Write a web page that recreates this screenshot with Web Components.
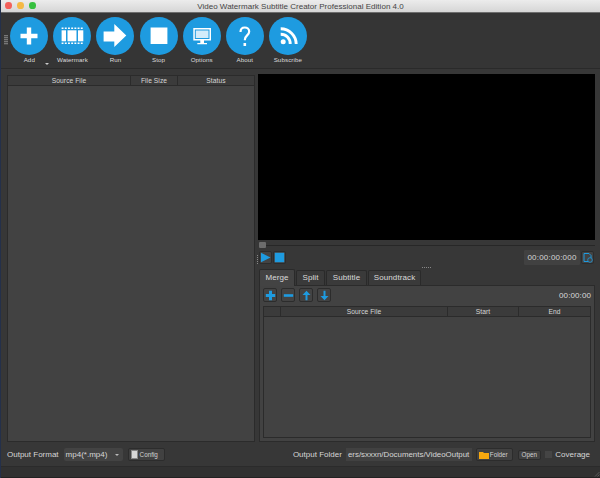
<!DOCTYPE html>
<html lang="en"><head><meta charset="utf-8"><title>Video Watermark Subtitle Creator</title>
<style>
html,body{margin:0;padding:0;background:#333}
body{width:600px;height:478px;overflow:hidden;font-family:"Liberation Sans",Arial,sans-serif}
</style></head><body>
<app-window></app-window>
<script>
function def(name, css, html){
  customElements.define(name, class extends HTMLElement{
    constructor(){super();const r=this.attachShadow({mode:'open'});
      const h=typeof html==='function'?html(this):html;
      r.innerHTML='<style>'+css+'</style>'+h;}
  });
}
const dots=y=>[8.6,11.8,15,18.2,21.4,24.600,27.8].map(x=>`<rect x="${x}" y="${y}" width="1.900" height="1.500" fill="#fff"/>`).join('');
const ICONS={
 add:'<path d="M16.800 10.500h4.400v6.300h6.300v4.400h-6.300v6.300h-4.400v-6.300h-6.300v-4.400h6.300z" fill="#fff"/>',
 watermark:dots(10.500)+dots(25.500)+'<rect x="8.600" y="13.300" width="4.400" height="11" fill="#fff"/><rect x="14.500" y="13.300" width="9" height="11" fill="#fff"/><rect x="25" y="13.300" width="5.300" height="11" fill="#fff"/>',
 run:'<path fill="#fff" d="M7.600 14.500H18.300V7L30.300 18.500 18.300 30V24.500H7.600z"/>',
 stop:'<rect x="10.600" y="10.500" width="16.800" height="16.500" fill="#fff"/>',
 options:'<path fill="#fff" fill-rule="evenodd" d="M10.300 11H28V23.500H21V26h3V27.300H14.300V26h3V23.500H10.300zM11.800 12.500V22H26.500V12.500z"/><rect x="12.800" y="13.500" width="12.700" height="7.500" fill="#d4ecfa"/>',
 about:'<path fill="none" stroke="#fff" stroke-width="2.200" d="M14.500 15c0-3 1.900-4.500 4.300-4.500s4.400 1.600 4.400 4c0 3.800-4.300 3.900-4.300 8v.8"/><rect x="17.500" y="26" width="2.600" height="3" fill="#fff"/>',
 subscribe:'<circle cx="14.200" cy="24.700" r="2.500" fill="#fff"/><path fill="none" stroke="#fff" stroke-width="2.900" d="M11.700 17.200a9.500 9.500 0 0 1 9.500 9.800M11.700 11.800a15.500 15.500 0 0 1 15.500 15.200"/>'
};
def('window-title',`:host{display:flex;flex:none;align-items:center;height:13px;box-sizing:border-box;background:linear-gradient(#ececec,#d6d6d6);border-bottom:1px solid #6d6d6d;position:relative}
 .l{display:flex;gap:5.300px;padding-left:4.300px;margin-top:-1px}.l i{width:6.700px;height:6.700px;border-radius:50%;display:block}
 .t{position:absolute;left:0;right:0;text-align:center;font:8px "Liberation Sans",sans-serif;letter-spacing:.02px;color:#444;top:1.500px}`,
 `<div class="l"><i style="background:#f3605b"></i><i style="background:#f5b945"></i><i style="background:#37c03f"></i></div><div class="t">Video Watermark Subtitle Creator Professional Edition 4.0</div>`);
def('tool-button',`:host{display:flex;flex-direction:column;align-items:center;flex:none;width:38px;margin-right:5.100px;position:relative}
 svg{display:block;width:38px;height:38px;flex:none}
 span{font:6.200px/7px "Liberation Sans",sans-serif;color:#dcdcdc;margin-top:1.200px;white-space:nowrap;letter-spacing:.1px}
 .m{position:absolute;right:-1px;top:46px;width:0;height:0;border:2px solid transparent;border-top:2px solid #ccc;border-bottom:0}`,
 e=>`<svg viewBox="0 0 38 38"><circle cx="19" cy="19" r="19" fill="#1e9be0"/>${ICONS[e.getAttribute('icon')]}</svg><span>${e.getAttribute('label')}</span>${e.hasAttribute('menu')?'<i class="m"></i>':''}`);
def('tool-bar',`:host{display:flex;flex:none;height:56px;background:#353535;padding:3.500px 0 0 3px;box-sizing:border-box;border-bottom:1px solid #2a2a2a}
 .g{width:4px;height:10px;margin:18.500px 2.300px 0 0;background:repeating-linear-gradient(#777 0 1px,#4a4a4a 1px 2px);flex:none}`,
 `<div class="g"></div><slot></slot>`);
def('data-table',`:host{display:flex;flex-direction:column;min-height:0;background:#424242;border:1px solid #2b2b2b;box-sizing:border-box}
 .h{display:flex;flex:none;height:9px;background:#3b3b3b;border-bottom:1px solid #2b2b2b;font:6.700px/9px "Liberation Sans",sans-serif;color:#d6d6d6;letter-spacing:.05px}
 .h span{display:block;text-align:center;border-right:1px solid #2b2b2b;box-sizing:border-box;flex:none}.h span:last-child{border:0;flex:1}`,
 e=>`<div class="h">${e.getAttribute('cols').split('|').map(c=>{const[a,b]=c.split(':');return `<span style="width:${b}px">${a}</span>`}).join('')}</div>`);
def('icon-btn',`:host{display:flex;align-items:center;justify-content:center;flex:none;width:13px;height:13px;background:#434343;border:.5px solid #2c2c2c;border-radius:2px;box-sizing:border-box}
 svg{display:block;width:11px;height:11px}`,
 e=>`<svg viewBox="0 0 11 11">${e.getAttribute('d')}</svg>`);
def('video-pane',`:host{display:flex;flex-direction:column;flex:none}
 .v{height:166px;background:#000;flex:none}
 .s{height:10px;flex:none;display:flex;align-items:center;position:relative}
 .s b{display:block;height:1px;background:#272727;flex:1;margin-left:6px}
 .s i{display:block;width:7px;height:6.500px;border-radius:1px;background:#6d6d6d;position:absolute;left:1px;top:1.500px}
 .c{display:flex;align-items:flex-start;gap:1px;height:16px;padding:0 1px 0 1px;flex:none;position:relative}
 .c icon-btn{margin-top:.5px}
 .sp{flex:1}
 .tm{font:8px/15px "Liberation Sans",sans-serif;color:#d6d6d6;background:#414141;width:56px;height:15px;text-align:center;letter-spacing:.2px;border-radius:1px}
 .vg{position:absolute;left:-1px;top:5px;width:1px;height:10px;background:repeating-linear-gradient(#888 0 1px,transparent 1px 2px)}`,
 `<div class="v"></div><div class="s"><b></b><i></i></div><div class="c"><span class="vg"></span>
 <icon-btn d='<path d="M1 .8l9.500 4.700L1 10.200z" fill="#1e9be0"/>'></icon-btn>
 <icon-btn d='<rect x=".8" y=".8" width="9.400" height="9.400" fill="#1e9be0"/>'></icon-btn>
 <div class="sp"></div><div class="tm">00:00:00:000</div>
 <icon-btn d='<path d="M2 1.500h5l2 2v6H2z" fill="none" stroke="#1e9be0" stroke-width="1"/><circle cx="8" cy="8" r="2.300" fill="#434343" stroke="#1e9be0" stroke-width=".8"/>'></icon-btn></div>`);
def('tab-panel',`:host{display:flex;flex-direction:column;flex:1;min-height:0;margin-left:1px}
 .t{display:flex;flex:none;height:16px;gap:1px;font:8px/14px "Liberation Sans",sans-serif;color:#dadada;letter-spacing:.1px}
 .t span{display:block;flex:none;background:#3a3a3a;border:.5px solid #2a2a2a;border-bottom:0;margin-top:1px;height:15px;box-sizing:border-box;border-radius:2px 2px 0 0;line-height:14px;text-align:center}
 .t span.a{background:#434343;margin-top:0;height:17px;position:relative;z-index:1;line-height:15px}
 .p{flex:1;display:flex;flex-direction:column;background:#424242;border:1px solid #2b2b2b;box-sizing:border-box;padding:2px 3px 3px 3px;min-height:0}
 .r{display:flex;align-items:center;gap:4px;height:14px;flex:none;margin-bottom:4px}
 .r icon-btn{width:14px;height:14px}
 .r em{font:normal 8px "Liberation Sans",sans-serif;color:#dadada;margin-left:auto;letter-spacing:.1px}
 data-table{flex:1}`,
 `<div class="t"><span class="a" style="width:36px">Merge</span><span style="width:29px">Split</span><span style="width:41px">Subtitle</span><span style="width:53px">Soundtrack</span></div><div class="p"><div class="r">
 <icon-btn d='<path d="M4 .8h3V4h3.200v3H7v3.200H4V7H.8V4H4z" fill="#1e9be0"/>'></icon-btn>
 <icon-btn d='<rect x=".8" y="4.200" width="9.400" height="2.600" fill="#1e9be0"/>'></icon-btn>
 <icon-btn d='<path d="M5.500 .8L9.500 5H6.500v5.200h-2V5H1.500z" fill="#1e9be0"/>'></icon-btn>
 <icon-btn d='<path d="M5.500 10.200L1.500 6H4.500V.8h2V6h3z" fill="#1e9be0"/>'></icon-btn>
 <em>00:00:00</em></div><data-table cols=":17|Source File:167|Start:71|End:0"></data-table></div>`);
def('bottom-bar',`:host{display:flex;align-items:center;flex:none;height:23px;padding:0 10px 0 6px;box-sizing:border-box;font:8px "Liberation Sans",sans-serif;color:#d6d6d6;background:#373737}
 .sel{width:59px;height:13px;background:#434343;border-radius:2px;margin-left:5px;box-sizing:border-box;padding-left:2px;line-height:13px;display:flex;justify-content:space-between;align-items:center;flex:none}
 .sel i{display:block;border:2px solid transparent;border-top:2px solid #bbb;border-bottom:0;margin-right:4px}
 .b{display:flex;align-items:center;height:13px;background:#414141;border:.5px solid #2c2c2c;border-radius:2px;box-sizing:border-box;font-size:6.300px;color:#d2d2d2;flex:none}
 .cf{width:37px;margin-left:5px;padding-left:2px;gap:2px}
 .cf i{display:block;width:7px;height:9px;background:#d8d8d8;border:.5px solid #888;box-sizing:border-box}
 .lbl{margin-left:auto}
 .path{width:126px;height:13px;background:#414141;margin-left:4px;overflow:hidden;text-align:right;white-space:nowrap;line-height:13px;padding-right:2.500px;box-sizing:border-box;flex:none;font-size:7.900px}
 .fd{width:37px;margin-left:4px;padding-left:2px;gap:1px}
 .op{width:23px;margin-left:5px;justify-content:center;height:10px}
 .ck{width:7px;height:7px;background:#454545;margin:0 3.500px 0 4px;flex:none}`,
 `<span>Output Format</span><div class="sel"><span>mp4(*.mp4)</span><i></i></div><div class="b cf"><i></i><span>Config</span></div><span class="lbl">Output Folder</span>
 <div class="path">ers/sxxxn/Documents/VideoOutput</div>
 <div class="b fd"><svg width="10" height="8" viewBox="0 0 10 8"><path d="M0 1h4l1 1h5v6H0z" fill="#f7a80f"/></svg><span>Folder</span></div>
 <div class="b op">Open</div><div class="ck"></div><span>Coverage</span>`);
def('app-window',`:host{display:flex;flex-direction:column;width:600px;height:478px;box-sizing:border-box;border-left:1px solid #24304a;background:#373737;overflow:hidden}
 .main{display:flex;flex:1;min-height:0;padding:6px 0 1px 6px;gap:3px}
 .left{width:248px;flex:none;display:flex}
 .left data-table{flex:1}
 .right{flex:1;min-width:0;display:flex;flex-direction:column;padding-right:5px;margin-top:-1px}
 .gap{height:3px;flex:none;display:flex;justify-content:center;align-items:center}
 .gap i{display:block;width:10px;height:1px;background:repeating-linear-gradient(90deg,#888 0 1px,transparent 1px 2px)}
 .status{height:12px;flex:none;background:#313131;border-top:1px solid #2b2b2b;border-bottom:1px solid #222;box-sizing:border-box;display:flex;justify-content:flex-end;align-items:flex-end}
 .status svg{display:block}`,
 `<window-title></window-title>
 <tool-bar><tool-button icon="add" label="Add" menu></tool-button><tool-button icon="watermark" label="Watermark"></tool-button><tool-button icon="run" label="Run"></tool-button><tool-button icon="stop" label="Stop"></tool-button><tool-button icon="options" label="Options"></tool-button><tool-button icon="about" label="About"></tool-button><tool-button icon="subscribe" label="Subscribe"></tool-button></tool-bar>
 <div class="main"><div class="left"><data-table cols="Source File:123|File Size:47|Status:0"></data-table></div>
 <div class="right"><video-pane></video-pane><div class="gap"><i></i></div><tab-panel></tab-panel></div></div>
 <bottom-bar></bottom-bar><div class="status"><svg width="6" height="6" viewBox="0 0 6 6"><path d="M1 5.500L5.500 1M3.500 5.500L5.500 3.500" stroke="#666" stroke-width=".8"/></svg></div>`);
</script></body></html>
